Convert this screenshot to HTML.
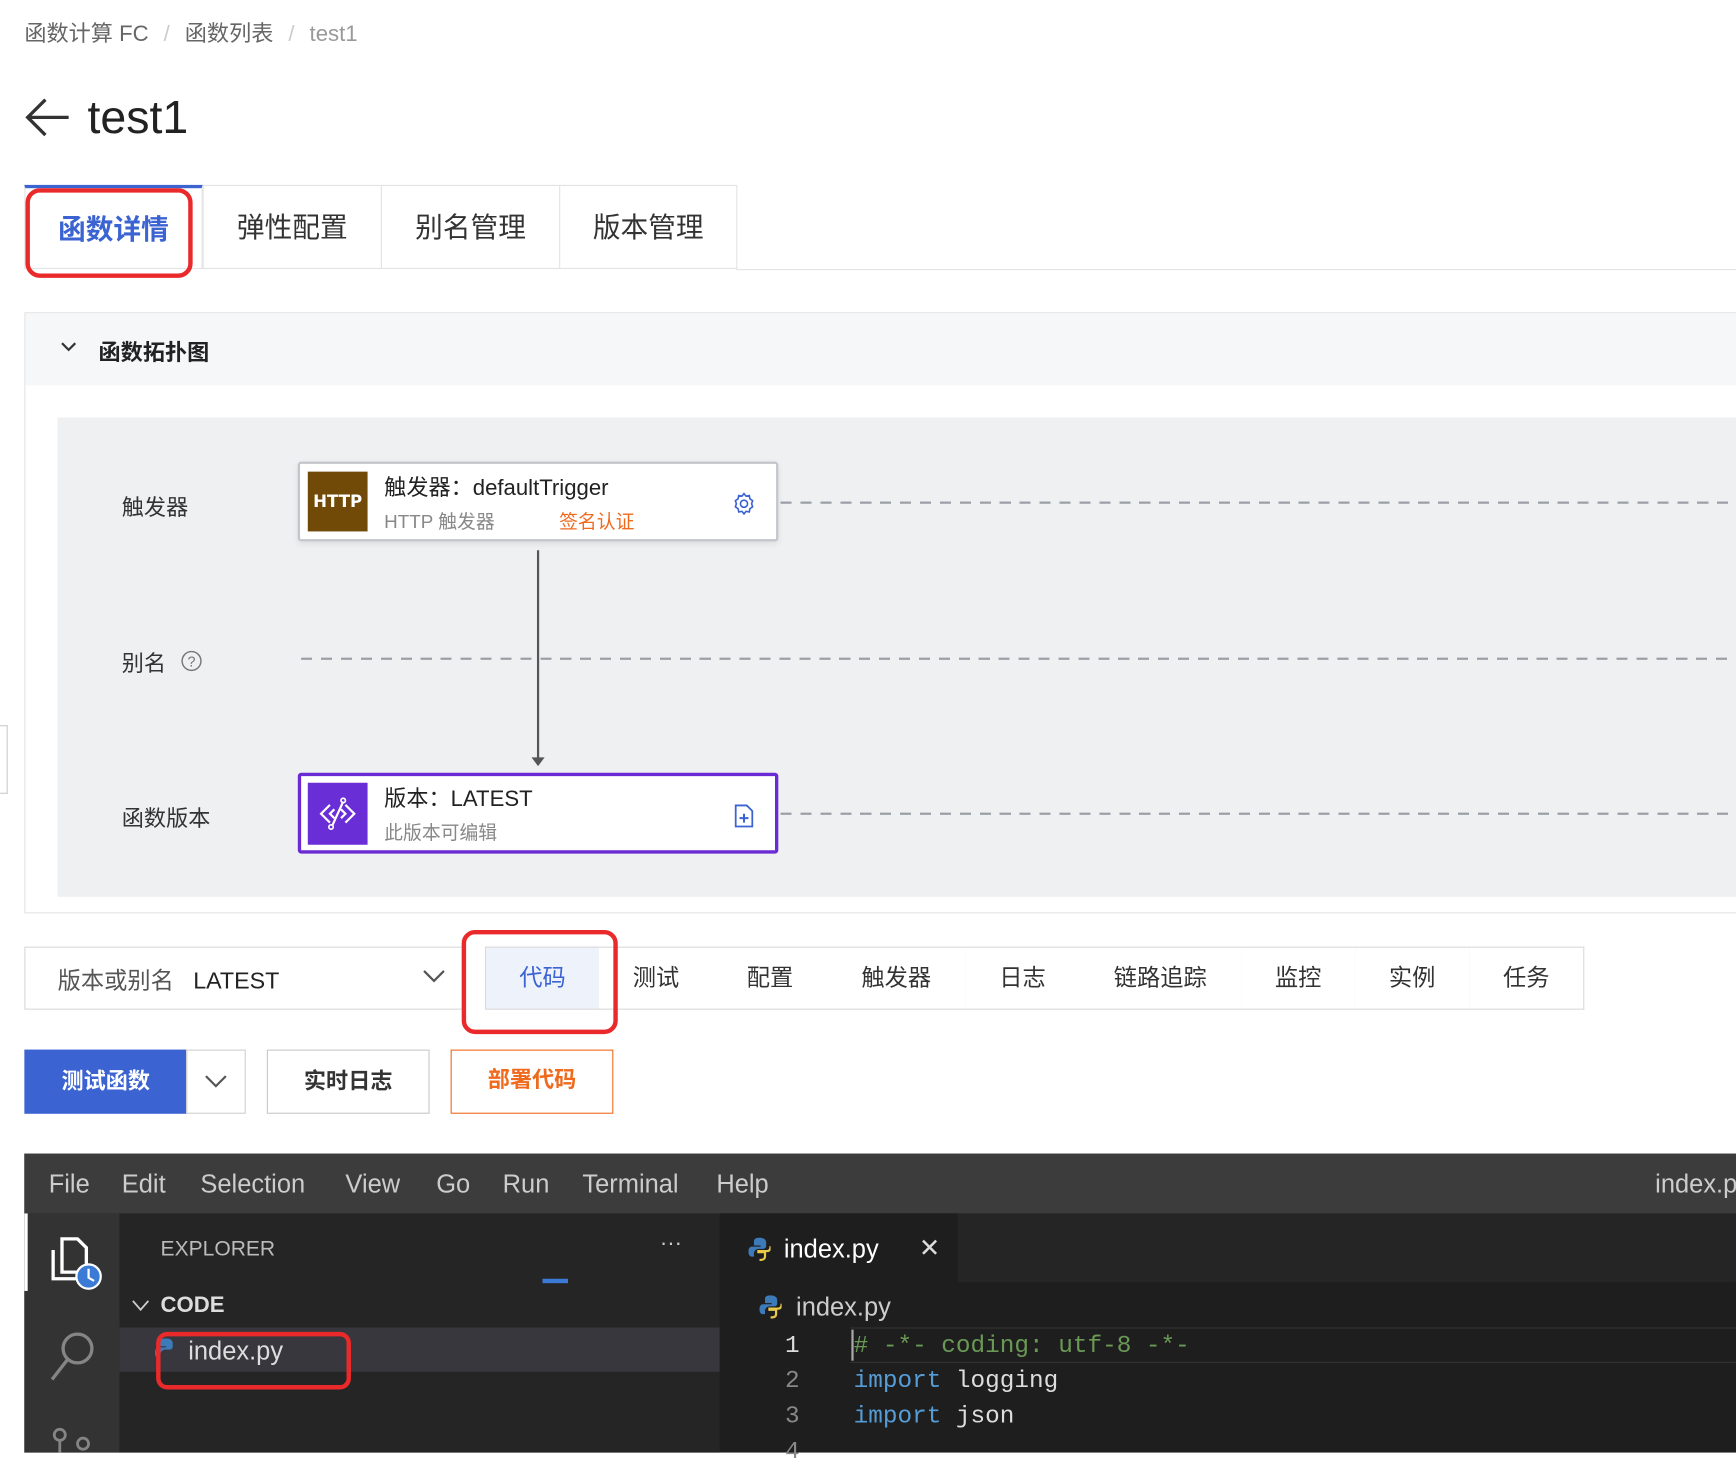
<!DOCTYPE html>
<html><head><meta charset="utf-8"><style>
html,body{margin:0;padding:0;background:#fff;overflow:hidden;width:1736px;height:1452px}
#w{position:absolute;left:0;top:0;width:1568px;height:1312px;transform:scale(1.10714);transform-origin:0 0;font-family:"Liberation Sans","Noto Sans CJK SC",sans-serif;color:#333}
.a{position:absolute}
.t{position:absolute;white-space:nowrap}
.tab{position:absolute;top:167px;height:76px;border:1px solid #e3e3e3;background:#fff;font-size:25px;line-height:76px;text-align:center;box-sizing:border-box}
.btn{position:absolute;top:855px;height:57px;border:1px solid #d9d9d9;border-left:none;background:#fff;font-size:21px;line-height:55px;text-align:center;box-sizing:border-box}
.dash{position:absolute;height:1.5px;background:repeating-linear-gradient(90deg,#9a9ea6 0 10px,transparent 10px 18px)}
.mono{font-family:"Liberation Mono","DejaVu Sans Mono",monospace}
</style></head><body><div id="w">
<div class="t" style="left:22px;top:14px;font-size:20px;color:#666">函数计算 FC <span style="color:#ccc;margin:0 8px">/</span> 函数列表 <span style="color:#ccc;margin:0 8px">/</span> <span style="color:#999">test1</span></div>
<svg class="a" style="left:22px;top:88px" width="42" height="36" viewBox="0 0 42 36"><path d="M40 18H3M19 2L3 18l16 16" fill="none" stroke="#333" stroke-width="3"/></svg>
<div class="t" style="left:79px;top:82px;font-size:42px;color:#222">test1</div>

<div class="tab" style="left:22px;width:161px;border-top:3px solid #3b63d2;color:#3b63d2;font-weight:bold">函数详情</div>
<div class="tab" style="left:183px;width:162px">弹性配置</div>
<div class="tab" style="left:344px;width:162px">别名管理</div>
<div class="tab" style="left:505px;width:161px">版本管理</div>
<div class="a" style="left:665px;top:243px;width:903px;height:1px;background:#e3e3e3"></div>
<div class="a" style="left:23px;top:170px;width:143px;height:73px;border:4px solid #ea2a2a;border-radius:13px"></div>

<div class="a" style="left:22px;top:282px;width:1560px;height:543px;border:1px solid #e3e3e3;box-sizing:border-box"></div>
<div class="a" style="left:23px;top:283px;width:1545px;height:65px;background:#f6f7f9"></div>
<svg class="a" style="left:54px;top:308px" width="16" height="12"><path d="M2 2l6 6 6-6" fill="none" stroke="#333" stroke-width="2"/></svg>
<div class="t" style="left:89px;top:302px;font-size:20px;font-weight:bold;color:#222">函数拓扑图</div>
<div class="a" style="left:52px;top:377px;width:1516px;height:433px;background:#eff0f2"></div>

<div class="t" style="left:110px;top:442px;font-size:20px">触发器</div>
<div class="t" style="left:110px;top:583px;font-size:20px">别名</div>
<svg class="a" style="left:163px;top:587px" width="20" height="20"><circle cx="10" cy="10" r="8.5" fill="none" stroke="#777" stroke-width="1.3"/><text x="10" y="15" font-size="13" text-anchor="middle" fill="#777" font-family="Liberation Sans">?</text></svg>
<div class="t" style="left:110px;top:723px;font-size:20px">函数版本</div>

<div class="dash" style="left:705px;top:453px;width:863px"></div>
<div class="dash" style="left:272px;top:594px;width:1296px"></div>
<div class="dash" style="left:705px;top:734px;width:863px"></div>
<div class="a" style="left:485px;top:497px;width:1.5px;height:188px;background:#555"></div>
<svg class="a" style="left:480px;top:684px" width="12" height="8"><path d="M0 0h12L6 8z" fill="#555"/></svg>

<div class="a" style="left:269px;top:417px;width:434px;height:72px;background:#fff;border:2px solid #c3c5cc;border-radius:3px;box-sizing:border-box;box-shadow:0 2px 6px rgba(0,0,0,.08)"></div>
<div class="a" style="left:278px;top:426px;width:54px;height:54px;background:#704a06;color:#fff;font-weight:bold;font-size:15px;line-height:54px;text-align:center;font-family:'DejaVu Sans',sans-serif">HTTP</div>
<div class="t" style="left:347px;top:424px;font-size:20px;color:#222">触发器：defaultTrigger</div>
<div class="t" style="left:347px;top:457px;font-size:17px;color:#888">HTTP 触发器</div>
<div class="t" style="left:505px;top:457px;font-size:17px;color:#f06a1e">签名认证</div>
<svg class="a" style="left:661px;top:444px" width="22" height="22" viewBox="0 0 24 24"><path d="M12 2l2 2.5 3.2-.6.6 3.2L20.5 9 19.5 12l1 3-2.7 1.9-.6 3.2-3.2-.6L12 22l-2-2.5-3.2.6-.6-3.2L3.5 15l1-3-1-3 2.7-1.9.6-3.2 3.2.6z" fill="none" stroke="#3b63d2" stroke-width="1.6"/><circle cx="12" cy="12" r="3.5" fill="none" stroke="#3b63d2" stroke-width="1.6"/></svg>

<div class="a" style="left:269px;top:698px;width:434px;height:73px;background:#fff;border:3px solid #6a2bd4;border-radius:3px;box-sizing:border-box"></div>
<div class="a" style="left:278px;top:707px;width:54px;height:56px;background:#6a2ed6"></div>
<svg class="a" style="left:286px;top:716px" width="38" height="38" viewBox="0 0 38 38"><path d="M12 11l-8 8 8 8M26 11l8 8-8 8M16 15l-4 4 4 4M22 15l4 4-4 4M24 8l-10 22" fill="none" stroke="#fff" stroke-width="2"/><circle cx="24" cy="7" r="2" fill="none" stroke="#fff" stroke-width="1.5"/><circle cx="13" cy="31" r="2" fill="none" stroke="#fff" stroke-width="1.5"/></svg>
<div class="t" style="left:347px;top:705px;font-size:20px;color:#222">版本：LATEST</div>
<div class="t" style="left:347px;top:738px;font-size:17px;color:#888">此版本可编辑</div>
<svg class="a" style="left:663px;top:726px" width="18" height="22" viewBox="0 0 18 22"><path d="M1.5 1.5h10l5 5v14h-15z" fill="none" stroke="#3b63d2" stroke-width="1.6"/><path d="M9 9v8M5 13h8" stroke="#3b63d2" stroke-width="1.8"/></svg>

<div class="a" style="left:0;top:655px;width:6px;height:60px;border:1px solid #ccc;border-left:none;background:#fff"></div>

<div class="a" style="left:22px;top:855px;width:396px;height:57px;border:1px solid #d9d9d9;box-sizing:border-box"></div>
<div class="t" style="left:52px;top:870px;font-size:21px;color:#555">版本或别名&nbsp;&nbsp;&nbsp;<span style="color:#222">LATEST</span></div>
<svg class="a" style="left:381px;top:875px" width="22" height="14"><path d="M2 2l9 9 9-9" fill="none" stroke="#555" stroke-width="2"/></svg>
<div class="btn" style="left:438px;width:104px;border-left:1px solid #d9d9d9;background:#eef3fb;color:#3b63d2">代码</div>
<div class="btn" style="left:541px;width:104px">测试</div>
<div class="btn" style="left:644px;width:104px">配置</div>
<div class="btn" style="left:747px;width:126px">触发器</div>
<div class="btn" style="left:872px;width:104px">日志</div>
<div class="btn" style="left:975px;width:147px">链路追踪</div>
<div class="btn" style="left:1121px;width:104px">监控</div>
<div class="btn" style="left:1224px;width:104px">实例</div>
<div class="btn" style="left:1327px;width:104px">任务</div>
<div class="a" style="left:417px;top:840px;width:133px;height:86px;border:4px solid #ea2a2a;border-radius:12px"></div>

<div class="a" style="left:22px;top:948px;width:147px;height:58px;background:#3b63d2;color:#fff;font-weight:bold;font-size:20px;line-height:58px;text-align:center">测试函数</div>
<div class="a" style="left:168px;top:948px;width:54px;height:58px;border:1px solid #d0d0d0;box-sizing:border-box"></div>
<svg class="a" style="left:184px;top:970px" width="22" height="14"><path d="M2 2l9 9 9-9" fill="none" stroke="#555" stroke-width="2"/></svg>
<div class="a" style="left:241px;top:948px;width:147px;height:58px;border:1px solid #c8c8c8;box-sizing:border-box;font-weight:bold;font-size:20px;line-height:56px;text-align:center">实时日志</div>
<div class="a" style="left:407px;top:948px;width:147px;height:58px;border:1.5px solid #f06a1e;box-sizing:border-box;font-weight:bold;font-size:20px;line-height:55px;text-align:center;color:#f06a1e">部署代码</div>

<div class="a" style="left:22px;top:1042px;width:1546px;height:270px;background:#1e1e1e"></div>
<div class="a" style="left:22px;top:1042px;width:1546px;height:54px;background:#3c3c3c"></div>
<div class="t" style="left:44px;top:1056px;font-size:23px;color:#ccc">File</div>
<div class="t" style="left:110px;top:1056px;font-size:23px;color:#ccc">Edit</div>
<div class="t" style="left:181px;top:1056px;font-size:23px;color:#ccc">Selection</div>
<div class="t" style="left:312px;top:1056px;font-size:23px;color:#ccc">View</div>
<div class="t" style="left:394px;top:1056px;font-size:23px;color:#ccc">Go</div>
<div class="t" style="left:454px;top:1056px;font-size:23px;color:#ccc">Run</div>
<div class="t" style="left:526px;top:1056px;font-size:23px;color:#ccc">Terminal</div>
<div class="t" style="left:647px;top:1056px;font-size:23px;color:#ccc">Help</div>
<div class="t" style="left:1495px;top:1056px;font-size:23px;color:#ccc">index.py</div>

<div class="a" style="left:22px;top:1096px;width:86px;height:216px;background:#333"></div>
<div class="a" style="left:22px;top:1096px;width:3px;height:70px;background:#fff"></div>
<svg class="a" style="left:42px;top:1113px" width="52" height="56" viewBox="0 0 52 56"><path d="M14 6h14l8 8v22H14z M6 16v26h22" fill="none" stroke="#fff" stroke-width="3"/><circle cx="38" cy="40" r="11" fill="#3b7bd6" stroke="#fff" stroke-width="2"/><path d="M38 33v8l5 3" fill="none" stroke="#fff" stroke-width="2"/></svg>
<svg class="a" style="left:42px;top:1200px" width="48" height="50" viewBox="0 0 48 50"><circle cx="28" cy="18" r="13" fill="none" stroke="#858585" stroke-width="3"/><path d="M19 28L5 46" stroke="#858585" stroke-width="3"/></svg>
<svg class="a" style="left:45px;top:1288px" width="40" height="24"><circle cx="9" cy="8" r="5" fill="none" stroke="#858585" stroke-width="2.5"/><circle cx="30" cy="16" r="5" fill="none" stroke="#858585" stroke-width="2.5"/><path d="M9 13v12" stroke="#858585" stroke-width="2.5"/></svg>

<div class="a" style="left:108px;top:1096px;width:542px;height:216px;background:#252526"></div>
<div class="t" style="left:145px;top:1118px;font-size:19px;color:#bbb">EXPLORER</div>
<div class="t" style="left:596px;top:1112px;font-size:20px;color:#ccc">···</div>
<div class="a" style="left:490px;top:1155px;width:23px;height:4px;background:#3b7bd6"></div>
<svg class="a" style="left:118px;top:1172px" width="18" height="14"><path d="M2 3l7 8 7-8" fill="none" stroke="#ccc" stroke-width="1.6"/></svg>
<div class="t" style="left:145px;top:1168px;font-size:20px;color:#ddd;font-weight:bold">CODE</div>
<div class="a" style="left:108px;top:1199px;width:542px;height:40px;background:#37373d"></div>
<svg class="a" style="left:140px;top:1208px" width="18" height="22" viewBox="0 0 18 22"><path d="M9 1c-4 0-5 2-5 4v3h6v1H3c-2 0-3 2-3 5s1 4 3 4h2v-3c0-2 2-4 4-4h4c2 0 3-1 3-3V5c0-2-2-4-5-4z" fill="#3d7ab8"/></svg>
<div class="t" style="left:170px;top:1207px;font-size:23px;color:#ddd">index.py</div>
<div class="a" style="left:141px;top:1203px;width:168px;height:44px;border:4px solid #ea2a2a;border-radius:10px"></div>

<div class="a" style="left:650px;top:1096px;width:918px;height:62px;background:#252526"></div>
<div class="a" style="left:650px;top:1096px;width:215px;height:62px;background:#1e1e1e"></div>
<svg class="a" style="left:676px;top:1117px" width="20" height="22" viewBox="0 0 20 22"><path d="M10 1C5 1 5 3 5 5v3h6v1H3C1 9 0 11 0 13.5S1 18 3 18h2v-3c0-2 2-4 4-4h4c2 0 3-1 3-3V5c0-2-2-4-6-4z" fill="#3d7ab8"/><path d="M10 21c5 0 5-2 5-4v-3H9v-1h8c2 0 3-2 3-4.5" fill="none" stroke="#e8c94a" stroke-width="2"/></svg>
<div class="t" style="left:708px;top:1115px;font-size:23px;color:#fff">index.py</div>
<div class="t" style="left:830px;top:1114px;font-size:23px;color:#ddd">✕</div>
<svg class="a" style="left:686px;top:1169px" width="20" height="22" viewBox="0 0 20 22"><path d="M10 1C5 1 5 3 5 5v3h6v1H3C1 9 0 11 0 13.5S1 18 3 18h2v-3c0-2 2-4 4-4h4c2 0 3-1 3-3V5c0-2-2-4-6-4z" fill="#3d7ab8"/><path d="M10 21c5 0 5-2 5-4v-3H9v-1h8c2 0 3-2 3-4.5" fill="none" stroke="#e8c94a" stroke-width="2"/></svg>
<div class="t" style="left:719px;top:1167px;font-size:23px;color:#ccc">index.py</div>
<div class="a" style="left:768px;top:1199px;width:800px;height:32px;border-top:1px solid #333;border-bottom:1px solid #333;box-sizing:border-box"></div>
<div class="a" style="left:769px;top:1201px;width:2px;height:28px;background:#aaa"></div>
<div class="t mono" style="left:709px;top:1203px;font-size:22px;color:#ddd">1</div>
<div class="t mono" style="left:709px;top:1235px;font-size:22px;color:#888">2</div>
<div class="t mono" style="left:709px;top:1267px;font-size:22px;color:#888">3</div>
<div class="t mono" style="left:709px;top:1299px;font-size:22px;color:#888">4</div>
<div class="t mono" style="left:771px;top:1203px;font-size:22px;color:#6a9955"># -*- coding: utf-8 -*-</div>
<div class="t mono" style="left:771px;top:1235px;font-size:22px;color:#ddd"><span style="color:#569cd6">import</span> logging</div>
<div class="t mono" style="left:771px;top:1267px;font-size:22px;color:#ddd"><span style="color:#569cd6">import</span> json</div>
</div></body></html>
